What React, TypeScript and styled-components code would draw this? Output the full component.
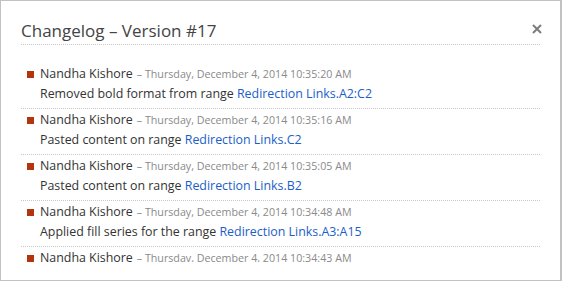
import React from 'react'
import styled, { createGlobalStyle } from 'styled-components'

const GlobalStyle = createGlobalStyle`
  html, body {
    margin: 0;
    padding: 0;
    background: #ffffff;
  }
  body {
    font-family: 'Open Sans', 'Liberation Sans', sans-serif;
  }
`

const Dialog = styled.div`
  box-sizing: border-box;
  width: 562px;
  height: 281px;
  border: 1px solid #c2c2c2;
  border-right-width: 2px;
  background: #ffffff;
  padding: 0 20px 18px 20px;
  display: flex;
  flex-direction: column;
`

const Header = styled.div`
  box-sizing: border-box;
  display: flex;
  align-items: flex-start;
  justify-content: space-between;
  height: 44px;
  padding-top: 20px;
  padding-bottom: 3px;
  border-bottom: 1px dotted #c8c8c8;
`

const Title = styled.h1`
  margin: 0;
  font-size: 17px;
  line-height: 20px;
  font-weight: 400;
  color: #444444;
`

const CloseButton = styled.button`
  border: none;
  background: none;
  padding: 0;
  margin-top: 3px;
  margin-right: -2px;
  width: 10px;
  height: 10px;
  display: flex;
  cursor: pointer;
`

const List = styled.ul`
  list-style: none;
  margin: 0;
  padding: 0;
  margin-top: 18px;
  flex: 1;
  overflow: hidden;
`

const Entry = styled.li`
  display: flex;
  flex-direction: column;
  padding: 1px 0 4px 0;
  border-bottom: 1px dotted #c8c8c8;
`

const MetaLine = styled.div`
  display: flex;
  align-items: baseline;
  height: 20px;
  line-height: 20px;
  white-space: nowrap;
`

const Bullet = styled.span`
  width: 7px;
  height: 7px;
  background: #b2350e;
  margin-left: 6px;
  margin-right: 6px;
  align-self: center;
`

const Author = styled.span`
  font-size: 12.4px;
  color: #333333;
`

const Stamp = styled.span`
  font-size: 10.7px;
  color: #8a8a8a;
  margin-left: 4px;
`

const Action = styled.div`
  padding-left: 19px;
  height: 20px;
  line-height: 20px;
  font-size: 12.4px;
  color: #333333;
  white-space: nowrap;
`

const Range = styled.a`
  color: #1b5ec9;
  text-decoration: none;
`

const entries = [
  { time: '10:35:20 AM', action: 'Removed bold format from range', range: 'Redirection Links.A2:C2' },
  { time: '10:35:16 AM', action: 'Pasted content on range', range: 'Redirection Links.C2' },
  { time: '10:35:05 AM', action: 'Pasted content on range', range: 'Redirection Links.B2' },
  { time: '10:34:48 AM', action: 'Applied fill series for the range', range: 'Redirection Links.A3:A15' },
  { time: '10:34:43 AM', action: 'Pasted content on range', range: 'Redirection Links.A3' },
]

export default function App() {
  return (
    <>
      <GlobalStyle />
      <Dialog>
        <Header>
          <Title>Changelog – Version #17</Title>
          <CloseButton aria-label="Close">
            <svg width="10" height="10" viewBox="0 0 10 10">
              <path d="M1 1 L9 9 M9 1 L1 9" stroke="#7d7d7d" strokeWidth="2" />
            </svg>
          </CloseButton>
        </Header>
        <List>
          {entries.map((e, i) => (
            <Entry key={i}>
              <MetaLine>
                <Bullet />
                <Author>Nandha Kishore</Author>
                <Stamp>– Thursday, December 4, 2014 {e.time}</Stamp>
              </MetaLine>
              <Action>
                {e.action} <Range href="#">{e.range}</Range>
              </Action>
            </Entry>
          ))}
        </List>
      </Dialog>
    </>
  )
}
